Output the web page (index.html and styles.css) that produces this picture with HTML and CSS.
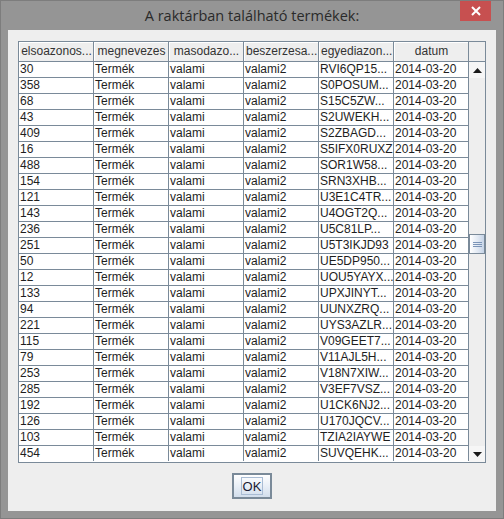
FILE: index.html
```html
<!DOCTYPE html>
<html>
<head>
<meta charset="utf-8">
<link rel="stylesheet" href="styles.css">
</head>
<body>
<div class="window">
  <div class="titlebar">
    <span class="title">A raktárban található termékek:</span>
    <button class="close" aria-label="Bezárás">
      <svg width="10" height="10" viewBox="0 0 10 10"><path d="M1 1 L9 9 M9 1 L1 9" stroke="#fff" stroke-width="2"/></svg>
    </button>
  </div>
  <div class="panel">
    <div class="pane">
      <div class="tablewrap">
        <table class="grid">
          <thead>
            <tr><th>elsoazonos...</th><th>megnevezes</th><th>masodazo...</th><th>beszerzesa...</th><th>egyediazon...</th><th>datum</th></tr>
          </thead>
          <tbody>
            <tr><td>30</td><td>Termék</td><td>valami</td><td>valami2</td><td>RVI6QP15...</td><td>2014-03-20</td></tr>
            <tr><td>358</td><td>Termék</td><td>valami</td><td>valami2</td><td>S0POSUM...</td><td>2014-03-20</td></tr>
            <tr><td>68</td><td>Termék</td><td>valami</td><td>valami2</td><td>S15C5ZW...</td><td>2014-03-20</td></tr>
            <tr><td>43</td><td>Termék</td><td>valami</td><td>valami2</td><td>S2UWEKH...</td><td>2014-03-20</td></tr>
            <tr><td>409</td><td>Termék</td><td>valami</td><td>valami2</td><td>S2ZBAGD...</td><td>2014-03-20</td></tr>
            <tr><td>16</td><td>Termék</td><td>valami</td><td>valami2</td><td>S5IFX0RUXZ</td><td>2014-03-20</td></tr>
            <tr><td>488</td><td>Termék</td><td>valami</td><td>valami2</td><td>SOR1W58...</td><td>2014-03-20</td></tr>
            <tr><td>154</td><td>Termék</td><td>valami</td><td>valami2</td><td>SRN3XHB...</td><td>2014-03-20</td></tr>
            <tr><td>121</td><td>Termék</td><td>valami</td><td>valami2</td><td>U3E1C4TR...</td><td>2014-03-20</td></tr>
            <tr><td>143</td><td>Termék</td><td>valami</td><td>valami2</td><td>U4OGT2Q...</td><td>2014-03-20</td></tr>
            <tr><td>236</td><td>Termék</td><td>valami</td><td>valami2</td><td>U5C81LP...</td><td>2014-03-20</td></tr>
            <tr><td>251</td><td>Termék</td><td>valami</td><td>valami2</td><td>U5T3IKJD93</td><td>2014-03-20</td></tr>
            <tr><td>50</td><td>Termék</td><td>valami</td><td>valami2</td><td>UE5DP950...</td><td>2014-03-20</td></tr>
            <tr><td>12</td><td>Termék</td><td>valami</td><td>valami2</td><td>UOU5YAYX...</td><td>2014-03-20</td></tr>
            <tr><td>133</td><td>Termék</td><td>valami</td><td>valami2</td><td>UPXJINYT...</td><td>2014-03-20</td></tr>
            <tr><td>94</td><td>Termék</td><td>valami</td><td>valami2</td><td>UUNXZRQ...</td><td>2014-03-20</td></tr>
            <tr><td>221</td><td>Termék</td><td>valami</td><td>valami2</td><td>UYS3AZLR...</td><td>2014-03-20</td></tr>
            <tr><td>115</td><td>Termék</td><td>valami</td><td>valami2</td><td>V09GEET7...</td><td>2014-03-20</td></tr>
            <tr><td>79</td><td>Termék</td><td>valami</td><td>valami2</td><td>V11AJL5H...</td><td>2014-03-20</td></tr>
            <tr><td>253</td><td>Termék</td><td>valami</td><td>valami2</td><td>V18N7XIW...</td><td>2014-03-20</td></tr>
            <tr><td>285</td><td>Termék</td><td>valami</td><td>valami2</td><td>V3EF7VSZ...</td><td>2014-03-20</td></tr>
            <tr><td>192</td><td>Termék</td><td>valami</td><td>valami2</td><td>U1CK6NJ2...</td><td>2014-03-20</td></tr>
            <tr><td>126</td><td>Termék</td><td>valami</td><td>valami2</td><td>U170JQCV...</td><td>2014-03-20</td></tr>
            <tr><td>103</td><td>Termék</td><td>valami</td><td>valami2</td><td>TZIA2IAYWE</td><td>2014-03-20</td></tr>
            <tr><td>454</td><td>Termék</td><td>valami</td><td>valami2</td><td>SUVQEHK...</td><td>2014-03-20</td></tr>
          </tbody>
        </table>
      </div>
      <div class="vscroll">
        <div class="corner"></div>
        <div class="arrow">
          <svg width="9" height="5" viewBox="0 0 9 5"><path d="M0 5 L4.5 0 L9 5 Z" fill="#1a1a1a"/></svg>
        </div>
        <div class="track">
          <div class="thumb">
            <svg width="9" height="5" viewBox="0 0 9 5"><path d="M0 0.5 H9 M0 2.5 H9 M0 4.5 H9" stroke="#7c95b8" stroke-width="1"/></svg>
          </div>
        </div>
        <div class="arrow">
          <svg width="9" height="5" viewBox="0 0 9 5"><path d="M0 0 L4.5 5 L9 0 Z" fill="#1a1a1a"/></svg>
        </div>
      </div>
    </div>
    <button class="ok"><span class="focus">OK</span></button>
  </div>
</div>
</body>
</html>
```

FILE: styles.css
```css
* { box-sizing: border-box; }
html, body { margin: 0; padding: 0; background: #959595; }
body { width: 504px; height: 519px; overflow: hidden; }

.window {
  width: 504px;
  height: 519px;
  background: #959595;
  border: 1px solid #7d7d7d;
  padding: 0 7px 7px 7px;
  display: flex;
  flex-direction: column;
}

.titlebar {
  height: 29px;
  display: flex;
  align-items: center;
  justify-content: center;
  position: relative;
}
.title {
  font-family: "Open Sans", "Noto Sans", sans-serif;
  font-size: 14.5px;
  color: #2a2a2a;
  margin-top: -1px;
}
.close {
  position: absolute;
  top: 0;
  right: 5px;
  width: 31px;
  height: 20px;
  background: #c75050;
  border: none;
  padding: 0;
  display: flex;
  align-items: center;
  justify-content: center;
}

.panel {
  flex: 1;
  background: #eeeeee;
  display: flex;
  flex-direction: column;
  align-items: center;
  padding-top: 11px;
}

.pane {
  width: 468px;
  height: 422px;
  border: 1px solid #7a8a99;
  display: flex;
  background: #ffffff;
}

.tablewrap { width: 450px; overflow: hidden; }

.grid {
  border-collapse: separate;
  border-spacing: 0;
  table-layout: fixed;
  width: 450px;
  font-family: "Liberation Sans", Arial, sans-serif;
  font-size: 12px;
}
.grid th, .grid td {
  width: 75px;
  border-right: 1px solid #7a8a99;
  white-space: nowrap;
  overflow: hidden;
  font-weight: normal;
}
.grid th {
  height: 20px;
  border-bottom: 1px solid #7a8a99;
  background: #eeeeee;
  color: #333333;
  text-align: center;
  padding: 0 1px 1px 2px;
  box-shadow: inset 1px 1px 0 #ffffff;
}
.grid td {
  height: 16px;
  border-bottom: 1px solid #7a8a99;
  color: #1e1e1e;
  padding: 0 0 0 1px;
  line-height: 15px;
}
.grid tbody tr:last-child td { border-bottom: none; height: 15px; }

.vscroll {
  width: 16px;
  display: flex;
  flex-direction: column;
  background: #eeeeee;
}
.corner {
  height: 20px;
  background: #eeeeee;
  border-bottom: 1px solid #7a8a99;
}
.arrow {
  height: 16px;
  background: #f6f6f6;
  display: flex;
  align-items: center;
  justify-content: center;
}
.track {
  flex: 1;
  background: #eeeeee;
  padding-top: 156px;
}
.thumb {
  height: 20px;
  border: 1px solid #7a8a99;
  background: linear-gradient(to right, #ffffff, #dfe7f2 60%, #c5d3e6);
  display: flex;
  align-items: center;
  justify-content: center;
}

.ok {
  margin-top: 10px;
  width: 40px;
  height: 26px;
  border: 2px solid #7a8a99;
  background: linear-gradient(to bottom, #ffffff, #e9eff7 50%, #d2deec);
  padding: 0;
  display: flex;
  align-items: center;
  justify-content: center;
  font-family: "Liberation Sans", Arial, sans-serif;
  font-size: 13px;
  color: #1a1a33;
}
.focus {
  border: 1px solid #a9bcd4;
  padding: 1px 1px 0 1px;
  line-height: 15px;
}
```
